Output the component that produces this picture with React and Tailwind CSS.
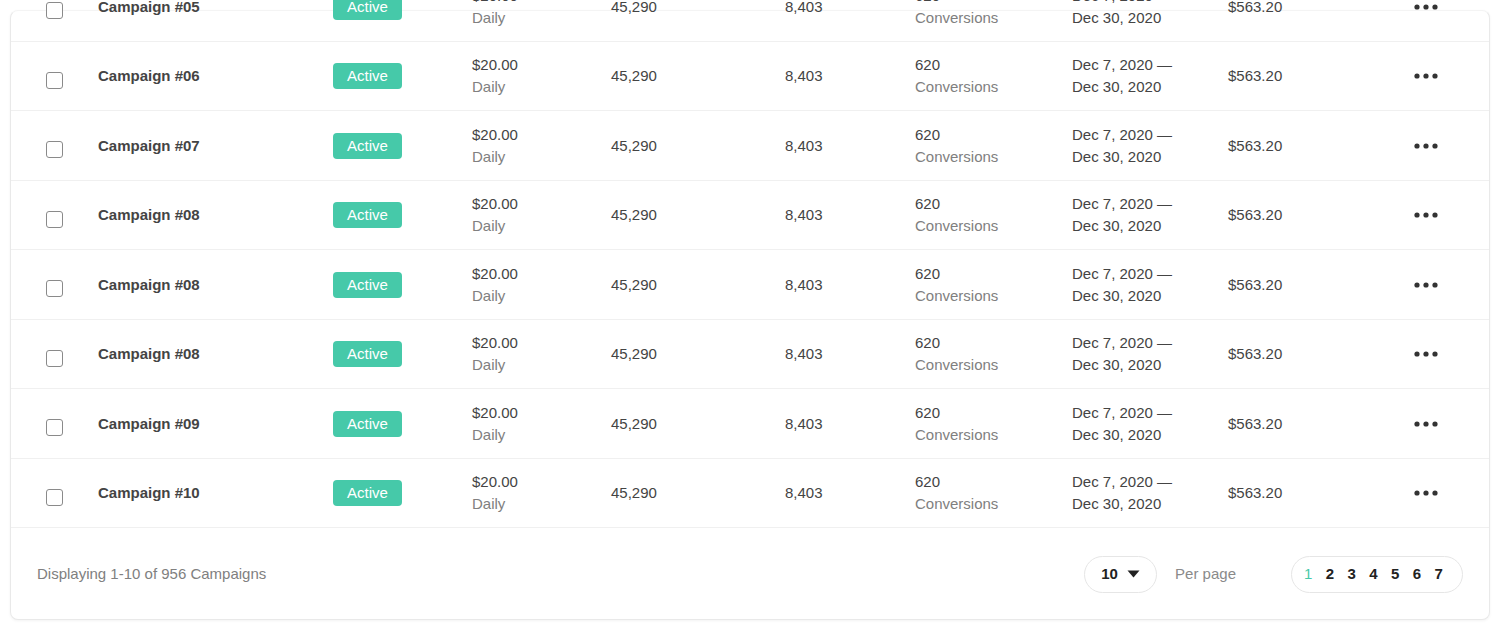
const rows = [
  '#05',
  '#06',
  '#07',
  '#08',
  '#08',
  '#08',
  '#09',
  '#10',
];

function Dots() {
  return (
    <svg width="24" height="6" viewBox="0 0 24 6" className="text-[#333]">
      <circle cx="3" cy="3" r="2.6" fill="currentColor" />
      <circle cx="12" cy="3" r="2.6" fill="currentColor" />
      <circle cx="21" cy="3" r="2.6" fill="currentColor" />
    </svg>
  );
}

function CampaignRow({ id }) {
  return (
    <div className="flex h-[69.5px] items-center border-b border-[#f0f0f0] pl-[35px] pt-px text-[15px] leading-[22px] text-[#444]">
      <div className="flex w-[52px] items-center">
        <span className="mt-2 block h-[17px] w-[17px] rounded-[3px] border-[1.5px] border-[#8a8a8a] bg-white" />
      </div>
      <div className="w-[235px] font-bold text-[#444]">Campaign {id}</div>
      <div className="w-[139px]">
        <span className="inline-flex h-[26px] w-[69px] items-center justify-center rounded-[4px] bg-[#46c9a9] text-white">
          Active
        </span>
      </div>
      <div className="w-[139px]">
        <div>$20.00</div>
        <div className="text-[#808080]">Daily</div>
      </div>
      <div className="w-[174px]">45,290</div>
      <div className="w-[130px]">8,403</div>
      <div className="w-[157px]">
        <div>620</div>
        <div className="text-[#808080]">Conversions</div>
      </div>
      <div className="w-[156px]">
        <div>Dec 7, 2020 —</div>
        <div>Dec 30, 2020</div>
      </div>
      <div className="w-[186px]">$563.20</div>
      <div className="flex w-[26px] items-center">
        <Dots />
      </div>
    </div>
  );
}

export default function App() {
  return (
    <div className="min-h-[630px] bg-white pt-[10px] font-['Liberation_Sans',Arial,sans-serif]">
      <div className="mx-[10px] rounded-lg border border-[#e9e9e9] border-t-[#f4f4f4] bg-white shadow-[0_1px_3px_rgba(0,0,0,0.05)]">
        <div className="-mt-[39px]">
          {rows.map((id, index) => (
            <CampaignRow key={index} id={id} />
          ))}
        </div>
        <div className="flex h-[91px] items-center justify-between px-[26px] pt-px text-[15px]">
          <span className="text-[#808080]">Displaying 1-10 of 956 Campaigns</span>
          <div className="flex items-center">
            <button className="flex h-[37px] w-[73px] items-center justify-center gap-[9px] rounded-full border border-[#e6e6e6] font-bold text-[#222]">
              <span>10</span>
              <svg width="13" height="8" viewBox="0 0 13 8">
                <path d="M0.5 0.5h12L6.5 7.5z" fill="#222" />
              </svg>
            </button>
            <span className="ml-[18px] text-[#8a8a8a]">Per page</span>
            <div className="ml-[55px] flex h-[37px] w-[172px] items-center gap-[13.4px] rounded-full border border-[#e6e6e6] pl-[12px] font-bold text-[#222]">
              <span className="font-normal text-[#46c9a9]">1</span>
              <span>2</span>
              <span>3</span>
              <span>4</span>
              <span>5</span>
              <span>6</span>
              <span>7</span>
            </div>
          </div>
        </div>
      </div>
    </div>
  );
}
